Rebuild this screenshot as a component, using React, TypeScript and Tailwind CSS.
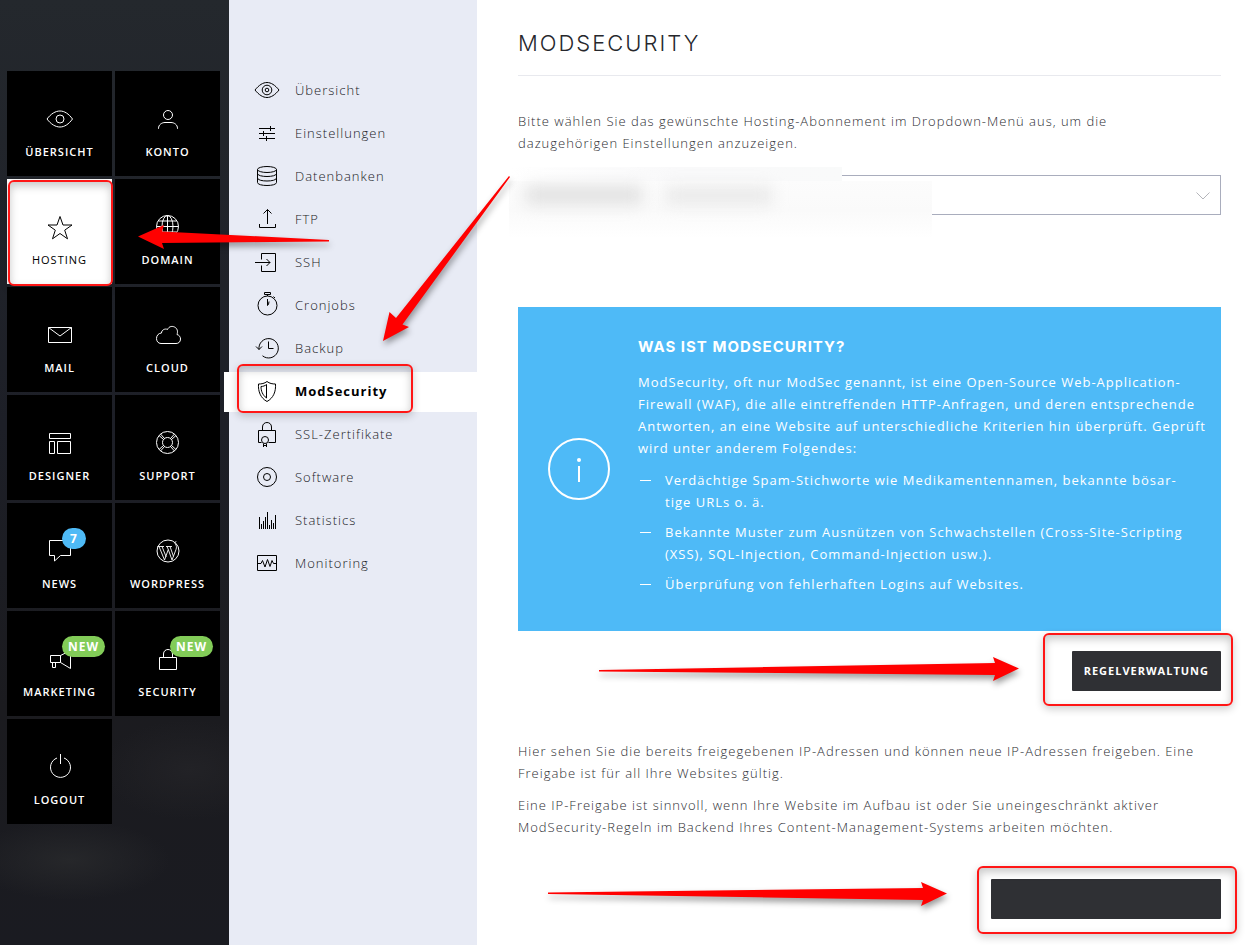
import React from 'react'

type Tile = { label: string; icon: React.ReactNode; active?: boolean; badge?: string; badgeClass?: string }
type NavItem = { label: string; icon: React.ReactNode; active?: boolean }

const tiles: Tile[] = [
  {
    label: 'Übersicht',
    icon: (
      <>
        <path d="M1 14C5 8.700 9.500 6 14 6s8.600 2.700 12.500 8C22.600 19.300 18.500 22 14 22S5 19.300 1 14Z" />
        <circle cx="14" cy="14" r="4" />
      </>
    ),
  },
  {
    label: 'Konto',
    icon: (
      <>
        <circle cx="14" cy="10" r="4.500" />
        <path d="M4.500 24v-.500C4.500 19.500 8 17.500 11 17.500h6c3 0 6.500 2 6.500 6v.500" />
      </>
    ),
  },
  {
    label: 'Hosting',
    active: true,
    icon: <path d="M14 3.500l3 8.500h9l-7.300 5.200 2.800 8.600L14 20.500l-7.500 5.300 2.800-8.600L2 12h9Z" />,
  },
  {
    label: 'Domain',
    icon: (
      <>
        <circle cx="13.500" cy="13.500" r="11" />
        <ellipse cx="13.500" cy="13.500" rx="5.500" ry="11" />
        <path d="M13.500 2.500v22M2.500 13.500h22M4.500 8h18M4.500 19h18" />
      </>
    ),
  },
  { label: 'Mail', icon: <path d="M2.500 6.500h23v15h-23ZM2.500 6.500L14 15l11.500-8.500" /> },
  {
    label: 'Cloud',
    icon: (
      <path d="M7 22.500C4 22.500 2.500 20 2.500 17.500c0-3 2-5.300 5-5.500 0-3 3.500-4.800 6-3.500 1.500-3.500 5-3.500 7-2.500 3 1.500 3.500 4.500 2.500 7.500 2.500.8 3.500 2.500 3.500 4.500 0 3-2 4.500-4.500 4.500Z" />
    ),
  },
  { label: 'Designer', icon: <path d="M3.500 4.500h21v5h-21ZM3.500 12.500h5v12h-5ZM11.500 12.500h13v12h-13Z" /> },
  {
    label: 'Support',
    icon: (
      <>
        <circle cx="13.500" cy="13.500" r="11" />
        <circle cx="13.500" cy="13.500" r="5" />
        <path d="M5 6.500l4.500 4M6.500 5l4 4.500M22 6.500l-4.500 4M20.500 5l-4 4.500M5 20.500l4.500-4M6.500 22l4-4.500M22 20.500l-4.500-4M20.500 22l-4-4.500" />
      </>
    ),
  },
  {
    label: 'News',
    badge: '7',
    badgeClass: 'w-6 bg-[#4ebaf6]',
    icon: <path d="M3.500 3.500h21v15h-10l-6 5.500v-5.500h-5Z" />,
  },
  {
    label: 'WordPress',
    icon: (
      <>
        <circle cx="14" cy="14" r="11" />
        <path
          strokeWidth="0.900"
          d="M3.500 9.500h6.500M12 9.500h6M5 9.500l5.500 13.500 3.800-10.500L13 9.500M8 9.500l4.200 10.500M14.300 12.500L18 23l4-10.500c.8-2.500.5-3.500-.5-5s-.5-3 .8-3M16 9.500l3.500 10"
        />
      </>
    ),
  },
  {
    label: 'Marketing',
    badge: 'NEW',
    badgeClass: 'w-[43px] bg-[#82cc58]',
    icon: <path d="M4.500 10.500h10v7h-10ZM6.500 17.500v5h3v-5M14.500 10.500l10-5v18l-10-6" />,
  },
  {
    label: 'Security',
    badge: 'NEW',
    badgeClass: 'w-[43px] bg-[#82cc58]',
    icon: <path d="M5.500 12.500h17v12h-17ZM9.500 12.500v-3.500c0-6 9-6 9 0v3.500" />,
  },
  { label: 'Logout', icon: <path d="M11 5a10 10 0 1 0 7 0M14.500 1v10" /> },
]

const navItems: NavItem[] = [
  {
    label: 'Übersicht',
    icon: (
      <>
        <path d="M2 13C6 8 10 5.500 14 5.500S22 8 26 13c-4 5-8 7.500-12 7.500S6 18 2 13Z" />
        <circle cx="14" cy="13" r="4.800" />
        <circle cx="14" cy="13" r="1.800" />
      </>
    ),
  },
  { label: 'Einstellungen', icon: <path d="M6 8.500h16M6 13.500h16M6 18.500h16M17.500 6v5M10.500 11v5M13.500 16v5" /> },
  {
    label: 'Datenbanken',
    icon: (
      <>
        <ellipse cx="14" cy="6.500" rx="9.500" ry="3" />
        <path d="M4.500 6.500v13c0 4 19 4 19 0v-13M4.500 10.500c0 4 19 4 19 0M4.500 15c0 4 19 4 19 0" />
      </>
    ),
  },
  { label: 'FTP', icon: <path d="M14.500 18V3.500M10.500 7.500l4-4 4 4M6.500 18v3.500h16V18" /> },
  { label: 'SSH', icon: <path d="M8.500 10.500v-6h14v18h-14v-6M2 13.500h15M13.500 10l3.500 3.500-3.500 3.500" /> },
  {
    label: 'Cronjobs',
    icon: (
      <>
        <circle cx="14.500" cy="13.500" r="9.500" />
        <path d="M11.500.500h6v2h-6ZM14.500 2.500v1.500M20.500 4.500l1.500 1.500M14.500 7v6.500l1-1 .5-3" />
      </>
    ),
  },
  { label: 'Backup', icon: <path d="M6 14.500a9.700 9.700 0 1 1 3.500 6.300M3 11.500l3 3 3-3M15.500 6.500v7h5" /> },
  {
    label: 'ModSecurity',
    active: true,
    icon: (
      <path d="M14 3.500c2.500 2 5.500 2.500 8.500 2.500.5 7.500-2 14-8.500 17.500C7.500 20 5 13.500 5.500 6c3 0 6-.5 8.500-2.500ZM13.500 6.500v13.500C9.500 17 8 13 8 8.500c2 0 4-.7 5.500-2Z" />
    ),
  },
  {
    label: 'SSL-Zertifikate',
    icon: (
      <>
        <path d="M8.500 21.500h-3v-12h17v12h-7M9.500 9.500V6c0-6 9-6 9 0v3.500M10.500 22.500V26M13.500 22.500V26M10.500 24.500h3" />
        <circle cx="12" cy="19" r="3.500" />
      </>
    ),
  },
  {
    label: 'Software',
    icon: (
      <>
        <circle cx="14" cy="13" r="9.500" />
        <circle cx="14" cy="13" r="3.500" />
      </>
    ),
  },
  {
    label: 'Statistics',
    icon: <path d="M6.500 10v12M8.500 17v5M10.500 14v8M12.500 10v12M14.500 5v17M16.500 18v4M18.500 13v9M20.500 16v6M22.500 8v14" />,
  },
  {
    label: 'Monitoring',
    icon: <path d="M4.500 5.500h19v15h-19ZM5 13.500h3l1.500-3 2.500 6.500 2.500-7.500 2.500 7 2-6 1.500 3h3" />,
  },
]

const Highlight = ({ className }: { className: string }) => (
  <span
    className={`pointer-events-none absolute z-10 rounded-[6px] border-2 border-[#ff1616] shadow-[inset_0_4px_8px_rgba(0,0,0,0.22),0_3px_8px_rgba(0,0,0,0.2)] ${className}`}
  />
)

const Arrow = ({ className, viewBox, d }: { className: string; viewBox: string; d: string }) => (
  <svg
    className={`pointer-events-none absolute z-20 overflow-visible drop-shadow-[1px_4px_3px_rgba(0,0,0,0.4)] ${className}`}
    viewBox={viewBox}
    fill="#ff0000"
    aria-hidden="true"
  >
    <path d={d} />
  </svg>
)

const Sidebar = () => {
  return (
    <aside className="w-[229px] shrink-0 bg-[radial-gradient(100px_40px_at_70px_860px,#26272a,transparent),radial-gradient(90px_50px_at_190px_770px,#222226,transparent),linear-gradient(#24282d,#1d1f27_45%,#1b1b1f_75%,#1a1b21)] pt-[71px] pl-[7px]">
      <ul className="grid grid-cols-[105px_105px] gap-[3px]">
        {tiles.map((tile) => (
          <li key={tile.label} className="relative">
            <a
              href="#"
              className={`flex h-[105px] flex-col items-center pt-[34px] ${tile.active ? 'bg-white text-black' : 'bg-black text-white'}`}
            >
              <svg className="size-[27px] overflow-visible" viewBox="0 0 27 27" fill="none" stroke="currentColor" aria-hidden="true">
                {tile.icon}
              </svg>
              <span className={`mt-3 text-[11px] leading-4 tracking-[1px] uppercase ${tile.active ? 'font-medium' : 'font-semibold'}`}>
                {tile.label}
              </span>
            </a>
            {tile.badge && (
              <span className={`absolute top-[25px] left-[55px] h-[21px] rounded-full text-center text-xs leading-[21px] font-bold tracking-[1px] text-white ${tile.badgeClass}`}>
                {tile.badge}
              </span>
            )}
            {tile.active && <Highlight className="top-px -right-px -bottom-[2px] left-px" />}
          </li>
        ))}
      </ul>
    </aside>
  )
}

const SubNav = () => {
  return (
    <nav className="w-[248px] shrink-0 bg-[#e8ebf5] pt-[71px]">
      <ul className="flex flex-col gap-[3px]">
        {navItems.map((item) => (
          <li key={item.label} className="relative">
            <a
              href="#"
              className={`flex h-10 items-center gap-[14px] text-[13px] tracking-[1px] ${item.active ? '-ml-[5px] bg-white pl-[29px] font-bold text-black' : 'pl-6 font-light text-[#18191d]'}`}
            >
              <svg className="size-7 text-black" viewBox="0 0 28 28" fill="none" stroke="currentColor" aria-hidden="true">
                {item.icon}
              </svg>
              {item.label}
            </a>
            {item.active && <Highlight className="-top-2 right-16 -bottom-px left-2" />}
          </li>
        ))}
      </ul>
    </nav>
  )
}

const InfoBox = () => {
  return (
    <section className="mt-[92px] flex items-center gap-7 bg-[#4ebaf7] py-[29px] pr-3 pl-[30px] font-normal text-white">
      <svg className="size-[62px] shrink-0" viewBox="0 0 62 62" fill="none" stroke="currentColor" strokeWidth="2" aria-hidden="true">
        <circle cx="31" cy="31" r="30" />
        <path d="M31 28v16" />
        <circle cx="31" cy="22" r="2" fill="currentColor" stroke="none" />
      </svg>
      <div className="min-w-0 flex-1">
        <h2 className="mb-[13px] font-['Inter','Open_Sans',sans-serif] text-[15px] leading-[22px] font-bold tracking-[1px] uppercase">
          Was ist ModSecurity?
        </h2>
        <p>
          ModSecurity, oft nur ModSec genannt, ist eine Open-Source Web-Application-Firewall (WAF), die alle
          eintreffenden HTTP-Anfragen, und deren entsprechende Antworten, an eine Website auf unterschiedliche
          Kriterien hin überprüft. Geprüft wird unter anderem Folgendes:
        </p>
        <ul className="mt-[10px] flex flex-col gap-2 pr-5 pb-[7px]">
          {[
            'Verdächtige Spam-Stichworte wie Medikamentennamen, bekannte bösar\u00adtige URLs o. ä.',
            'Bekannte Muster zum Ausnützen von Schwachstellen (Cross-Site-Scripting (XSS), SQL-Injection, Command-Injection usw.).',
            'Überprüfung von fehlerhaften Logins auf Websites.',
          ].map((text) => (
            <li key={text} className="flex gap-[14px]">
              <span className="mt-[11px] ml-[2px] h-px w-[11px] shrink-0 bg-white" />
              <span>{text}</span>
            </li>
          ))}
        </ul>
      </div>
    </section>
  )
}

export default function App() {
  return (
    <div className="relative flex min-h-screen bg-white font-['Open_Sans','Noto_Sans',sans-serif]">
      <Sidebar />
      <SubNav />
      <main className="min-w-0 flex-1 pt-[23px] pr-9 pb-6 pl-[41px] text-[13px] leading-[22px] font-light tracking-[1px] text-[#2c2d32]">
        <h1 className="border-b border-[#e8e9ee] pb-3 font-['Inter','Open_Sans',sans-serif] text-[22px] leading-10 font-light tracking-[2px] text-[#26272c] uppercase">
          ModSecurity
        </h1>
        <p id="abo-label" className="mt-[34px] pr-20">
          Bitte wählen Sie das gewünschte Hosting-Abonnement im Dropdown-Menü aus, um die dazugehörigen Einstellungen
          anzuzeigen.
        </p>
        <div className="relative mt-[21px]">
          <select aria-labelledby="abo-label" className="block h-10 w-full appearance-none rounded-none border border-[#a9adbd] bg-white px-4">
            <option></option>
          </select>
          <svg className="pointer-events-none absolute top-[17px] right-[11px] h-2 w-[14px]" viewBox="0 0 14 8" fill="none" stroke="#b4b5ba" aria-hidden="true">
            <path d="M.5.500l6.500 6.500L13.500.500" />
          </svg>
          {/* the subscription name is hidden */}
          <div className="pointer-events-none absolute -top-2 -left-[9px] h-4 w-[333px] bg-linear-to-r from-white via-[#f9f9fa] to-[#f9fafa]" />
          <div className="pointer-events-none absolute top-1.5 -left-[9px] h-[58px] w-[423px] bg-linear-to-b from-[#fcfcfc] via-[#fafafa] to-white" />
          <div className="pointer-events-none absolute top-[11px] left-2 h-[18px] w-[116px] bg-[#e0e0e0] blur-[8px]" />
          <div className="pointer-events-none absolute top-[12px] left-[148px] h-[17px] w-[106px] bg-[#e8e8e8] blur-[8px]" />
        </div>

        <InfoBox />

        <div className="relative mt-5 flex justify-end">
          <Arrow className="right-[202px] top-[6px] h-6 w-[420px]" viewBox="0 0 420 24" d="M0 13L396 6l-2-6 26 11.500L394 24l2-6L0 14.500Z" />
          <div className="relative">
            <button className="block h-10 rounded-[1px] bg-[#2f3034] px-3 text-[11px] font-bold tracking-[1px] text-white uppercase">
              Regelverwaltung
            </button>
            <Highlight className="-top-[18px] -right-3 -bottom-[15px] -left-[29px]" />
          </div>
        </div>

        <p className="mt-[49px]">
          Hier sehen Sie die bereits freigegebenen IP-Adressen und können neue IP-Adressen freigeben. Eine Freigabe ist
          für all Ihre Websites gültig.
        </p>
        <p className="mt-[10px]">
          Eine IP-Freigabe ist sinnvoll, wenn Ihre Website im Aufbau ist oder Sie uneingeschränkt aktiver
          ModSecurity-Regeln im Backend Ihres Content-Management-Systems arbeiten möchten.
        </p>

        <div className="relative mt-[41px] flex justify-end">
          <Arrow className="right-[274px] top-[3px] h-6 w-[399px]" viewBox="0 0 399 24" d="M0 10.500L375 6l-2-6 26 11.500L373 24l2-6L0 12Z" />
          <div className="relative">
            <button aria-label="IP-Adresse freigeben" className="block h-10 w-[230px] rounded-[1px] bg-[#2f3034]" />
            <Highlight className="-top-[13px] -right-4 -bottom-[15px] -left-[14px]" />
          </div>
        </div>
      </main>

      <Arrow className="top-[225px] left-[138px] h-6 w-[191px]" viewBox="0 0 191 24" d="M191 16.500L24 18l2 6L0 11.500 26 0l-2 6.500L191 15Z" />
      <Arrow
        className="top-[176px] left-[383px] h-[165px] w-[127px]"
        viewBox="0 0 127 165"
        d="M127 1L19.500 148.500 26 151 0 165l6.500-29 6.500 6L126 0Z"
      />
    </div>
  )
}
